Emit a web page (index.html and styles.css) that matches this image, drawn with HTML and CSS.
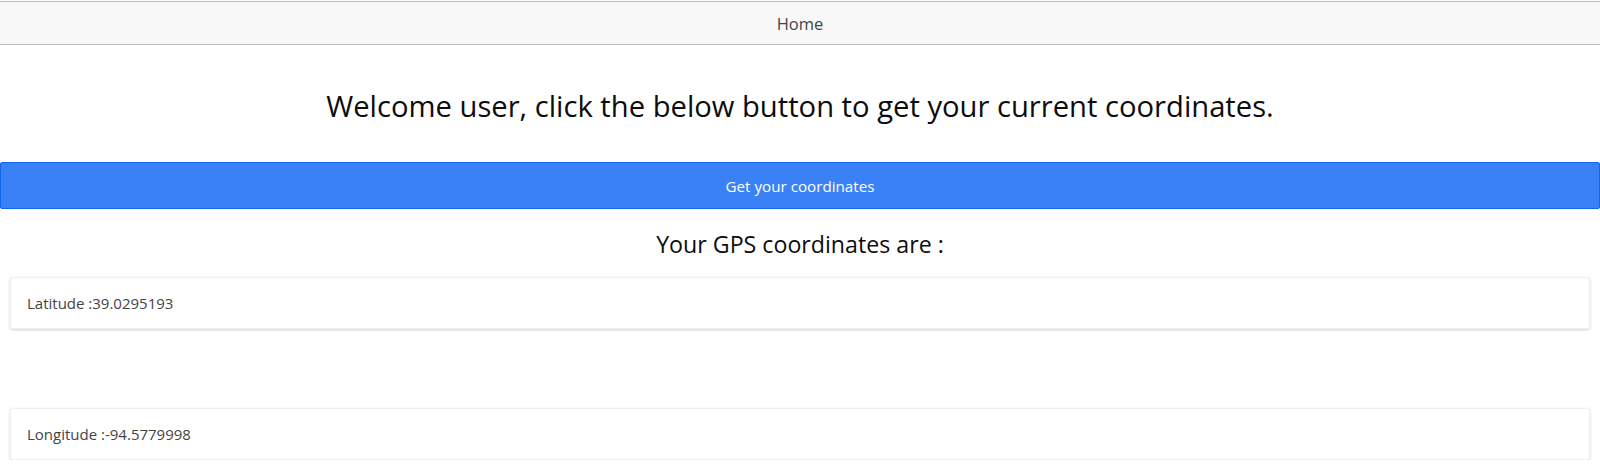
FILE: index.html
```html
<!DOCTYPE html>
<html lang="en">
<head>
<meta charset="utf-8">
<title>Home</title>
<link rel="stylesheet" href="styles.css">
</head>
<body>
<nav class="navbar">
  <span class="nav-link">Home</span>
</nav>
<main class="page">
  <h3 class="title">Welcome user, click the below button to get your current coordinates.</h3>
  <button class="btn-primary" type="button">Get your coordinates</button>
  <h4 class="subtitle">Your GPS coordinates are :</h4>
  <div class="cards">
    <div class="card">Latitude :39.0295193</div>
    <div class="card">Longitude :-94.5779998</div>
  </div>
</main>
</body>
</html>
```
FILE: styles.css
```css
html, body {
  margin: 0;
  padding: 0;
  background: #ffffff;
}
body {
  font-family: "Open Sans", "Noto Sans", "Liberation Sans", sans-serif;
  color: #111;
  padding-top: 1px;
}
.navbar {
  display: flex;
  align-items: center;
  justify-content: center;
  height: 42px;
  background: #f8f8f8;
  border-top: 1px solid #bcbcbc;
  border-bottom: 1px solid #bcbcbc;
}
.nav-link {
  font-size: 16.5px;
  font-weight: 500;
  color: #444;
  padding-top: 1px;
}
.page {
  display: flex;
  flex-direction: column;
}
.title {
  margin: 44px 0 0;
  font-size: 29.2px;
  line-height: 34px;
  font-weight: 500;
  text-align: center;
  color: #0d0d0d;
}
.btn-primary {
  margin-top: 39px;
  height: 47px;
  width: 100%;
  background: #3a81f5;
  border: 1px solid #1366f0;
  border-radius: 2px;
  color: #ffffff;
  font-family: inherit;
  font-size: 15.2px;
  cursor: pointer;
}
.subtitle {
  margin: 21px 0 18px;
  font-size: 23.2px;
  line-height: 29px;
  font-weight: 500;
  text-align: center;
  color: #0d0d0d;
}
.cards {
  display: flex;
  flex-direction: column;
  gap: 79px;
  padding: 0 10px;
}
.card {
  height: 52px;
  display: flex;
  align-items: center;
  padding: 0 16px;
  background: #fff;
  border: 1px solid #f0f0f0;
  border-radius: 3px;
  box-shadow: 0 1px 3px rgba(0, 0, 0, 0.18);
  font-size: 15px;
  color: #444;
  box-sizing: border-box;
}
```
